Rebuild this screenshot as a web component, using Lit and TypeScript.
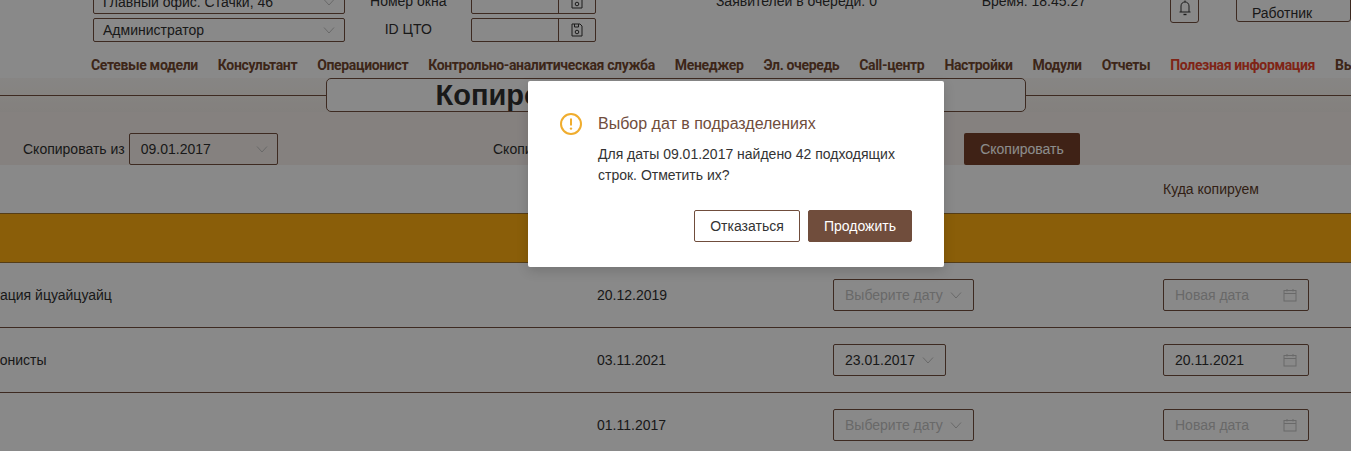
import { LitElement, css, html, svg } from 'lit'
import { customElement } from 'lit/decorators.js'

const chevron = html`<svg class="chev" width="12" height="12" viewBox="0 0 12 12"><path d="M1 3.5 L6 9 L11 3.5" fill="none" stroke="currentColor" stroke-width="1"/></svg>`

const calendar = html`<svg class="cal" width="14" height="14" viewBox="0 0 14 14" fill="none" stroke="currentColor" stroke-width="1">
  ${svg`<rect x="1" y="2.5" width="12" height="10.5"/><path d="M1 5.5 H13 M4 1 V3.5 M10 1 V3.5"/>`}
</svg>`

const save = html`<svg width="12" height="14" viewBox="0 0 12 14" fill="none" stroke="currentColor" stroke-width="1">
  ${svg`<path d="M1 1 H9 L11 3 V13 H1 Z"/><path d="M3.5 1 V4 H7.5 V1"/><circle cx="6" cy="9" r="1.8"/>`}
</svg>`

const bell = html`<svg width="14" height="16" viewBox="0 0 14 16" fill="none" stroke="currentColor" stroke-width="1">
  ${svg`<path d="M3 12 V6 C3 3.5 4.8 2 7 2 C9.2 2 11 3.5 11 6 V12"/><path d="M1.5 12 H12.5"/><path d="M5.5 14.5 H8.5" stroke-width="1.4"/><path d="M7 0.5 V2"/>`}
</svg>`

const warn = html`<svg width="22" height="22" viewBox="0 0 22 22">
  ${svg`<circle cx="11" cy="11" r="10" fill="none" stroke="#f0ad2e" stroke-width="2"/><path d="M11 5.5 V12.5" stroke="#f0ad2e" stroke-width="2"/><circle cx="11" cy="15.6" r="1.2" fill="#f0ad2e"/>`}
</svg>`

const navItems = ['Сетевые модели', 'Консультант', 'Операционист', 'Контрольно-аналитическая служба', 'Менеджер', 'Эл. очередь', 'Call-центр', 'Настройки', 'Модули', 'Отчеты']

const rows = [
  { name: 'Консультация йцуайцуайц', created: '20.12.2019', from: '', to: '' },
  { name: 'Операционисты', created: '03.11.2021', from: '23.01.2017', to: '20.11.2021' },
  { name: 'Касса', created: '01.11.2017', from: '', to: '' },
]

@customElement('app-root')
export class AppRoot extends LitElement {
  render() {
    return html`
      <div class="page">
        <div class="scrolled">
          <div class="top">
            <div class="col selects">
              <div class="field wide"><span>Главный офис. Стачки, 46</span>${chevron}</div>
              <div class="field wide"><span>Администратор</span>${chevron}</div>
            </div>
            <div class="col labels">
              <div>Номер окна</div>
              <div>ID ЦТО</div>
            </div>
            <div class="col inputs">
              <div class="addon"><i></i><b>${save}</b></div>
              <div class="addon"><i></i><b>${save}</b></div>
            </div>
            <div class="queue">Заявителей в очереди: 0</div>
            <div class="time">Время: 18:45:27</div>
            <div class="bell">${bell}</div>
            <div class="worker">Работник</div>
          </div>

          <nav class="nav">
            ${navItems.map((n) => html`<a>${n}</a>`)}
            <a class="red">Полезная информация</a>
            <a>Выход</a>
          </nav>

          <div class="title-row">
            <div class="line"></div>
            <div class="title"><h1>Копирование дат подразделений</h1></div>
            <div class="line"></div>
          </div>

          <div class="toolbar">
            <div class="pair">
              <span>Скопировать из</span>
              <div class="field from"><span>09.01.2017</span>${chevron}</div>
            </div>
            <div class="pair"><span>Скопировать в</span></div>
            <button class="copy">Скопировать</button>
          </div>

          <div class="table">
            <div class="grid head">
              <div></div>
              <div>Дата создания</div>
              <div>Откуда копируем</div>
              <div>Куда копируем</div>
            </div>
            <div class="amber"></div>
            ${rows.map((r) => html`
              <div class="grid row">
                <div>${r.name}</div>
                <div>${r.created}</div>
                <div>
                  <div class="field pick ${r.from ? '' : 'empty'}"><span>${r.from || 'Выберите дату'}</span>${chevron}</div>
                </div>
                <div>
                  <div class="field date ${r.to ? '' : 'empty'}"><span>${r.to || 'Новая дата'}</span>${calendar}</div>
                </div>
              </div>
            `)}
          </div>
        </div>

        <div class="overlay"></div>
        <div class="modal">
          <div class="modal-title"><span class="warn">${warn}</span>Выбор дат в подразделениях</div>
          <div class="modal-text">Для даты 09.01.2017 найдено 42 подходящих строк. Отметить их?</div>
          <div class="modal-btns">
            <button class="btn ghost">Отказаться</button>
            <button class="btn solid">Продожить</button>
          </div>
        </div>
      </div>
    `
  }

  static styles = css`
    :host {
      display: block;
      font-family: "Liberation Sans", Arial, sans-serif;
      font-size: 14px;
      color: #2f2f2f;
    }
    * { box-sizing: border-box; }

    .page {
      position: relative;
      height: 451px;
      overflow: hidden;
      background: #fafafa;
    }
    .scrolled { margin-top: -10px; }

    .top {
      display: flex;
      padding-left: 93px;
      white-space: nowrap;
      background: #fafafa;
    }
    .col { display: flex; flex-direction: column; gap: 4px; }
    .selects { width: 265px; }
    .labels { width: 132px; }
    .labels div { height: 24px; line-height: 22px; text-align: center; }
    .inputs { width: 131px; }
    .queue { margin-left: 120px; width: 279px; line-height: 22px; }
    .time { width: 198px; line-height: 22px; }
    .bell {
      width: 30px;
      height: 33px;
      border: 1px solid #704d3c;
      border-radius: 3px;
      display: flex;
      align-items: flex-end;
      justify-content: center;
      padding-bottom: 6px;
      color: #333;
    }
    .worker {
      margin-left: 37px;
      width: 120px;
      height: 32px;
      padding: 14px 0 0 15px;
      border: 1px solid #704d3c;
      border-radius: 3px;
    }

    .field {
      display: inline-flex;
      align-items: center;
      justify-content: space-between;
      border: 1px solid #704d3c;
      border-radius: 2px;
      white-space: nowrap;
    }
    .wide { height: 24px; padding: 0 9px; width: 100%; }
    .chev { color: #bfbfbf; flex: none; }
    .cal { color: #bfbfbf; flex: none; }

    .addon { display: flex; height: 24px; border: 1px solid #704d3c; border-radius: 2px; }
    .addon i { flex: 1; }
    .addon b {
      width: 37px;
      border-left: 1px solid #704d3c;
      display: flex;
      align-items: center;
      justify-content: center;
      color: #333;
    }

    .nav {
      display: flex;
      gap: 20px;
      padding-left: 91px;
      margin-top: 13px;
      height: 20px;
      line-height: 20px;
      white-space: nowrap;
      font-family: "Roboto", sans-serif;
      font-weight: 700;
      font-size: 14px;
      letter-spacing: -0.35px;
      color: #6f452e;
    }
    .nav .red { color: #e8432a; }

    .title-row {
      display: flex;
      align-items: center;
      margin-top: 3px;
      height: 34px;
      background: linear-gradient(#f6f3f0, #efeae5);
    }
    .line { flex: 1; height: 1px; background: #704d3c; }
    .title {
      width: 700px;
      height: 34px;
      border: 1px solid #704d3c;
      border-radius: 5px;
      display: flex;
      align-items: center;
      justify-content: center;
      background: #fafafa;
    }
    h1 { margin: 0; font-size: 29px; font-weight: 700; white-space: nowrap; }

    .toolbar {
      display: grid;
      grid-template-columns: 470px 471px auto;
      justify-content: start;
      align-items: center;
      height: 53px;
      padding: 21px 0 0 23px;
      background: #f2ece7;
    }
    .pair { display: flex; align-items: center; gap: 4px; }
    .from { width: 149px; height: 32px; padding: 0 9px 0 11px; }
    .copy {
      width: 116px;
      height: 32px;
      border: 0;
      border-radius: 2px;
      background: #733f29;
      color: #fff;
      font: inherit;
    }

    .table { margin-left: -58px; }
    .grid {
      display: grid;
      grid-template-columns: 655px 236px 330px 1fr;
      align-items: center;
      white-space: nowrap;
    }
    .head { height: 48px; color: #5b3a28; }
    .amber {
      height: 50px;
      background: #fbac12;
      border-top: 1px solid #9c6f2a;
      border-bottom: 1px solid #9c6f2a;
    }
    .row { height: 65px; border-bottom: 1px solid #704d3c; }

    .pick, .date { height: 32px; padding: 0 11px; }
    .pick { gap: 7px; }
    .date { width: 146px; }
    .empty span { color: #bfbfbf; }

    .overlay { position: absolute; inset: 0; background: rgba(0, 0, 0, 0.45); }

    .modal {
      position: absolute;
      left: 528px;
      top: 81px;
      width: 416px;
      height: 186px;
      padding: 32px 32px 24px;
      background: #fff;
      border-radius: 2px;
      box-shadow: 0 4px 12px rgba(0, 0, 0, 0.15);
    }
    .modal-title {
      position: relative;
      padding-left: 38px;
      font-size: 16px;
      line-height: 22px;
      color: #704d3c;
    }
    .warn { position: absolute; left: 0; top: 0; height: 22px; }
    .modal-text {
      margin-top: 9px;
      padding-left: 38px;
      line-height: 21px;
      color: #333;
    }
    .modal-btns {
      display: flex;
      justify-content: flex-end;
      gap: 8px;
      margin-top: 24px;
    }
    .btn {
      height: 32px;
      border-radius: 2px;
      font: inherit;
    }
    .ghost { width: 106px; background: #fff; border: 1px solid #704d3c; color: #333; }
    .solid { width: 104px; background: #704d3c; border: 1px solid #704d3c; color: #fff; }
  `
}
